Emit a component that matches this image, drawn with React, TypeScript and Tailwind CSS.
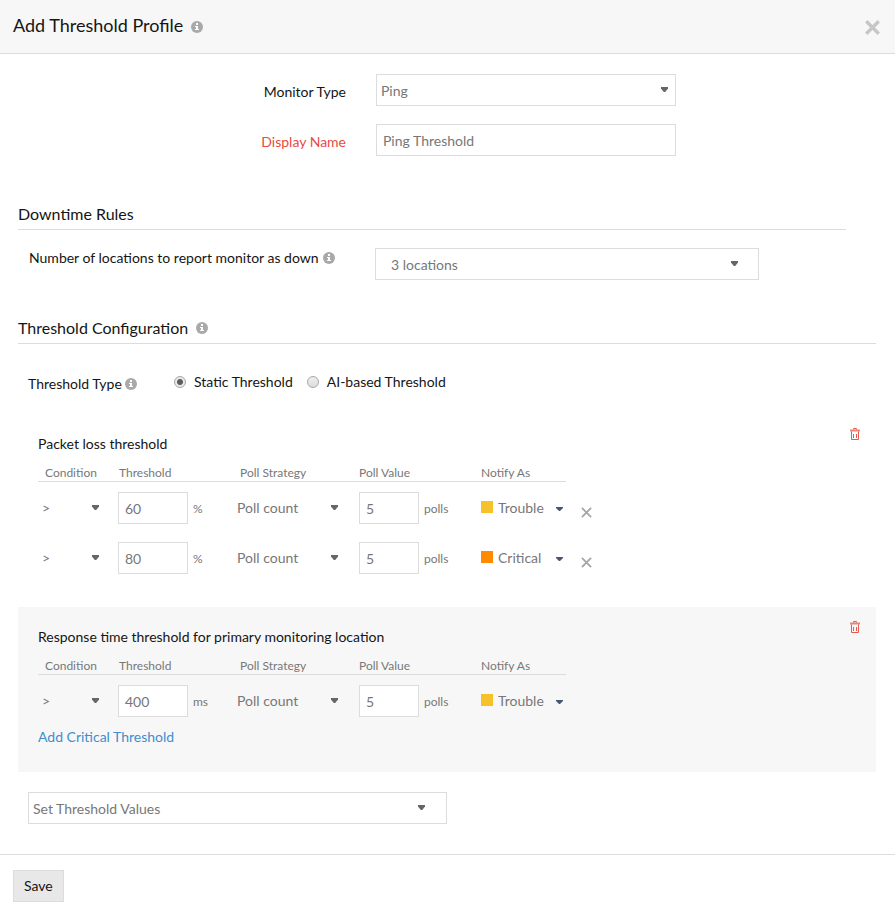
import { useState } from "react";
import type { ReactNode } from "react";

type Severity = "Trouble" | "Critical";

interface Rule {
  value: string;
  polls: string;
  notify: Severity;
}

function InfoIcon() {
  return (
    <svg width="12" height="12" viewBox="0 0 12 12" className="shrink-0" aria-hidden="true">
      <circle cx="6" cy="6" r="6" fill="#a9a9a9" />
      <path d="M5 2h2v2H5zM4 5h3v3h1v1H4V8h1V6H4z" fill="#fff" />
    </svg>
  );
}

function TrashIcon() {
  return (
    <svg width="10" height="12" viewBox="0 0 10 12" fill="none" stroke="#e8594c" aria-hidden="true">
      <path d="M3.5 1.5V.5h3v1" />
      <path d="M0 2.5h10" strokeWidth="2" strokeOpacity=".75" />
      <path d="M1.5 3.5v8h7v-8" />
      <path d="M3.5 6v4M6.5 6v4" />
    </svg>
  );
}

function CrossIcon({ size, stroke, color }: { size: number; stroke: number; color: string }) {
  return (
    <svg width={size} height={size} viewBox="0 0 12 12" stroke={color} strokeWidth={stroke} aria-hidden="true">
      <path d="M1 1l10 10M11 1L1 11" />
    </svg>
  );
}

interface DropdownProps {
  id?: string;
  label?: string;
  options: string[];
  wrapClass: string;
  selectClass: string;
  arrowClass: string;
  small?: boolean;
}

function Dropdown({ id, label, options, wrapClass, selectClass, arrowClass, small }: DropdownProps) {
  return (
    <div className={`relative h-8 ${wrapClass}`}>
      <select
        id={id}
        aria-label={label}
        className={`block h-full w-full cursor-pointer appearance-none rounded-none text-[#777] outline-none ${selectClass}`}
      >
        {options.map((o) => (
          <option key={o}>{o}</option>
        ))}
      </select>
      {small ? (
        <svg width="7" height="4" viewBox="0 0 7 4" className={`pointer-events-none absolute top-[15px] ${arrowClass}`} aria-hidden="true">
          <path d="M0 0h7v1L4 4H3L0 1z" fill="#465870" />
        </svg>
      ) : (
        <svg width="7" height="5" viewBox="0 0 7 5" className={`pointer-events-none absolute top-[13px] ${arrowClass}`} aria-hidden="true">
          <path d="M0 0h7v1.5L4.2 5H2.8L0 1.5z" fill="#666" />
        </svg>
      )}
    </div>
  );
}

const headCell = "border-b border-[#dcdcdc] pt-2.5 text-left align-bottom text-xs leading-[17px] font-normal";
const bodyCell = "pt-2.5 pb-2 align-top";
const textBox = "h-8 border border-[#dcdcdc] bg-white px-1.5 text-sm text-[#777] outline-none";

interface PanelProps {
  title: string;
  unit: string;
  rules: Rule[];
  removable?: boolean;
  shaded?: boolean;
  children?: ReactNode;
}

function ThresholdPanel({ title, unit, rules, removable, shaded, children }: PanelProps) {
  return (
    <section className={`flex items-start justify-between pr-4 pb-[25px] pl-5 ${shaded ? "bg-[#f7f7f7]" : ""}`}>
      <div className="pt-5">
        <h3 className="text-sm leading-5">{title}</h3>
        <table className="table-fixed border-separate border-spacing-0 text-[#777]">
          <colgroup>
            <col className="w-20" />
            <col className="w-[119px]" />
            <col className="w-[122px]" />
            <col className="w-[122px]" />
            <col className="w-[85px]" />
            <col className="w-10" />
          </colgroup>
          <thead>
            <tr>
              <th className={`${headCell} pl-[7px]`}>Condition</th>
              <th className={`${headCell} pl-px`}>Threshold</th>
              <th className={`${headCell} pl-[3px]`}>Poll Strategy</th>
              <th className={headCell}>Poll Value</th>
              <th className={headCell}>Notify As</th>
              <td />
            </tr>
          </thead>
          <tbody>
            {rules.map((rule, i) => (
              <tr key={i}>
                <td className={bodyCell}>
                  <Dropdown
                    label="Condition"
                    options={[">", "<", "="]}
                    wrapClass="w-20"
                    selectClass="pl-1 text-sm"
                    arrowClass="right-[19px]"
                  />
                </td>
                <td className={bodyCell}>
                  <div className="flex items-center gap-[5px]">
                    <input aria-label={`${title} value`} defaultValue={rule.value} className={`w-[70px] ${textBox}`} />
                    <span className="pt-0.5 text-xs">{unit}</span>
                  </div>
                </td>
                <td className={bodyCell}>
                  <Dropdown
                    label="Poll strategy"
                    options={["Poll count", "Poll average", "Time range"]}
                    wrapClass="w-[122px]"
                    selectClass="text-sm"
                    arrowClass="right-[21px]"
                  />
                </td>
                <td className={bodyCell}>
                  <div className="flex items-center gap-[5px]">
                    <input aria-label="Poll value" defaultValue={rule.polls} className={`w-[60px] ${textBox}`} />
                    <span className="pt-0.5 text-xs">polls</span>
                  </div>
                </td>
                <td className={bodyCell}>
                  <div className="flex items-center">
                    <span className={`mb-0.5 size-3 shrink-0 ${rule.notify === "Trouble" ? "bg-[#f7c12b]" : "bg-[#ff8a00]"}`} />
                    <Dropdown
                      label="Notify as"
                      options={rule.notify === "Trouble" ? ["Trouble", "Critical"] : ["Critical", "Trouble"]}
                      wrapClass="flex-1"
                      selectClass="pl-[5px] text-sm"
                      arrowClass="right-[3px]"
                      small
                    />
                  </div>
                </td>
                <td className="pt-2.5 align-top">
                  {removable && (
                    <button type="button" aria-label="Remove condition" className="ml-[15px] flex h-10 items-center">
                      <CrossIcon size={11} stroke={2} color="#a6a6a6" />
                    </button>
                  )}
                </td>
              </tr>
            ))}
          </tbody>
        </table>
        {children}
      </div>
      <button type="button" aria-label={`Delete ${title}`} className="mt-3.5">
        <TrashIcon />
      </button>
    </section>
  );
}

const radioClass =
  "size-3 shrink-0 appearance-none rounded-full border border-[#a8a8a8] bg-linear-to-b from-[#eee] to-[#ddd] checked:bg-[radial-gradient(circle,#5c5c5c_0_2.5px,#e8e8e8_3.5px)]";

export default function App() {
  const [type, setType] = useState("static");

  return (
    <div className="bg-white font-[Lato,sans-serif] text-sm leading-5 text-[#151515]">
      <header className="flex h-[54px] items-center justify-between border-b border-[#dcdcdc] bg-[#f7f7f7] pr-[15px] pl-[13px]">
        <div className="flex items-center gap-2">
          <h1 className="pb-1 text-lg leading-6">Add Threshold Profile</h1>
          <InfoIcon />
        </div>
        <button type="button" aria-label="Close" className="pt-0.5">
          <CrossIcon size={15} stroke={2.6} color="#c6c6c6" />
        </button>
      </header>

      <main className="pt-5 pr-[19px] pb-[30px] pl-[18px]">
        <div className="grid grid-cols-[328px_minmax(0,300px)] items-center gap-x-[30px] gap-y-[18px]">
          <label htmlFor="monitor-type" className="pt-1 text-right">Monitor Type</label>
          <Dropdown
            id="monitor-type"
            options={["Ping", "Website", "DNS Server"]}
            wrapClass="w-full"
            selectClass="border border-[#dcdcdc] pl-1 pt-0.5 text-sm"
            arrowClass="right-2"
          />
          <label htmlFor="display-name" className="pt-1 text-right text-[#e94b3f]">Display Name</label>
          <input id="display-name" defaultValue="Ping Threshold" className={`w-full ${textBox}`} />
        </div>

        <h2 className="mt-[47px] mr-[30px] border-b border-[#dcdcdc] pb-1 text-base leading-[22px]">Downtime Rules</h2>
        <div className="mt-[18px] flex items-start pl-[11px]">
          <div className="flex w-[346px] items-center gap-1">
            <label htmlFor="locations">Number of locations to report monitor as down</label>
            <InfoIcon />
          </div>
          <Dropdown
            id="locations"
            options={["3 locations", "2 locations", "1 location"]}
            wrapClass="w-96"
            selectClass="border border-[#dcdcdc] pl-[15px] pt-0.5 text-sm"
            arrowClass="right-[21px]"
          />
        </div>

        <div className="mt-[37px] flex items-center gap-2 border-b border-[#dcdcdc] pb-1">
          <h2 className="text-base leading-[22px]">Threshold Configuration</h2>
          <InfoIcon />
        </div>
        <div role="radiogroup" aria-labelledby="threshold-type" className="mt-[26px] flex items-center pl-2.5">
          <div className="flex w-[146px] items-center gap-[3px] pt-1">
            <span id="threshold-type">Threshold Type</span>
            <InfoIcon />
          </div>
          <label className="mr-3.5 flex items-center gap-2">
            <input type="radio" name="type" className={radioClass} checked={type === "static"} onChange={() => setType("static")} />
            Static Threshold
          </label>
          <label className="flex items-center gap-2">
            <input type="radio" name="type" className={radioClass} checked={type === "ai"} onChange={() => setType("ai")} />
            AI-based Threshold
          </label>
        </div>

        <div className="mt-5">
          <ThresholdPanel
            title="Packet loss threshold"
            unit="%"
            removable
            rules={[
              { value: "60", polls: "5", notify: "Trouble" },
              { value: "80", polls: "5", notify: "Critical" },
            ]}
          />
          <ThresholdPanel
            title="Response time threshold for primary monitoring location"
            unit="ms"
            shaded
            rules={[{ value: "400", polls: "5", notify: "Trouble" }]}
          >
            <a href="#add-critical" className="mt-0.5 block text-[#3d8fcf]">Add Critical Threshold</a>
          </ThresholdPanel>
        </div>

        <div className="mt-5 pl-2.5">
          <Dropdown
            label="Set Threshold Values"
            options={["Set Threshold Values", "Packet loss", "Response time"]}
            wrapClass="w-[419px]"
            selectClass="border border-[#dcdcdc] bg-white pl-1 pt-0.5 text-sm"
            arrowClass="right-[22px]"
          />
        </div>
      </main>

      <footer className="border-t border-[#dcdcdc] px-[13px] pt-[15px] pb-[11px]">
        <button type="button" className="h-8 border border-[#dcdcdc] bg-[#e8e8e8] px-2.5">Save</button>
      </footer>
    </div>
  );
}
